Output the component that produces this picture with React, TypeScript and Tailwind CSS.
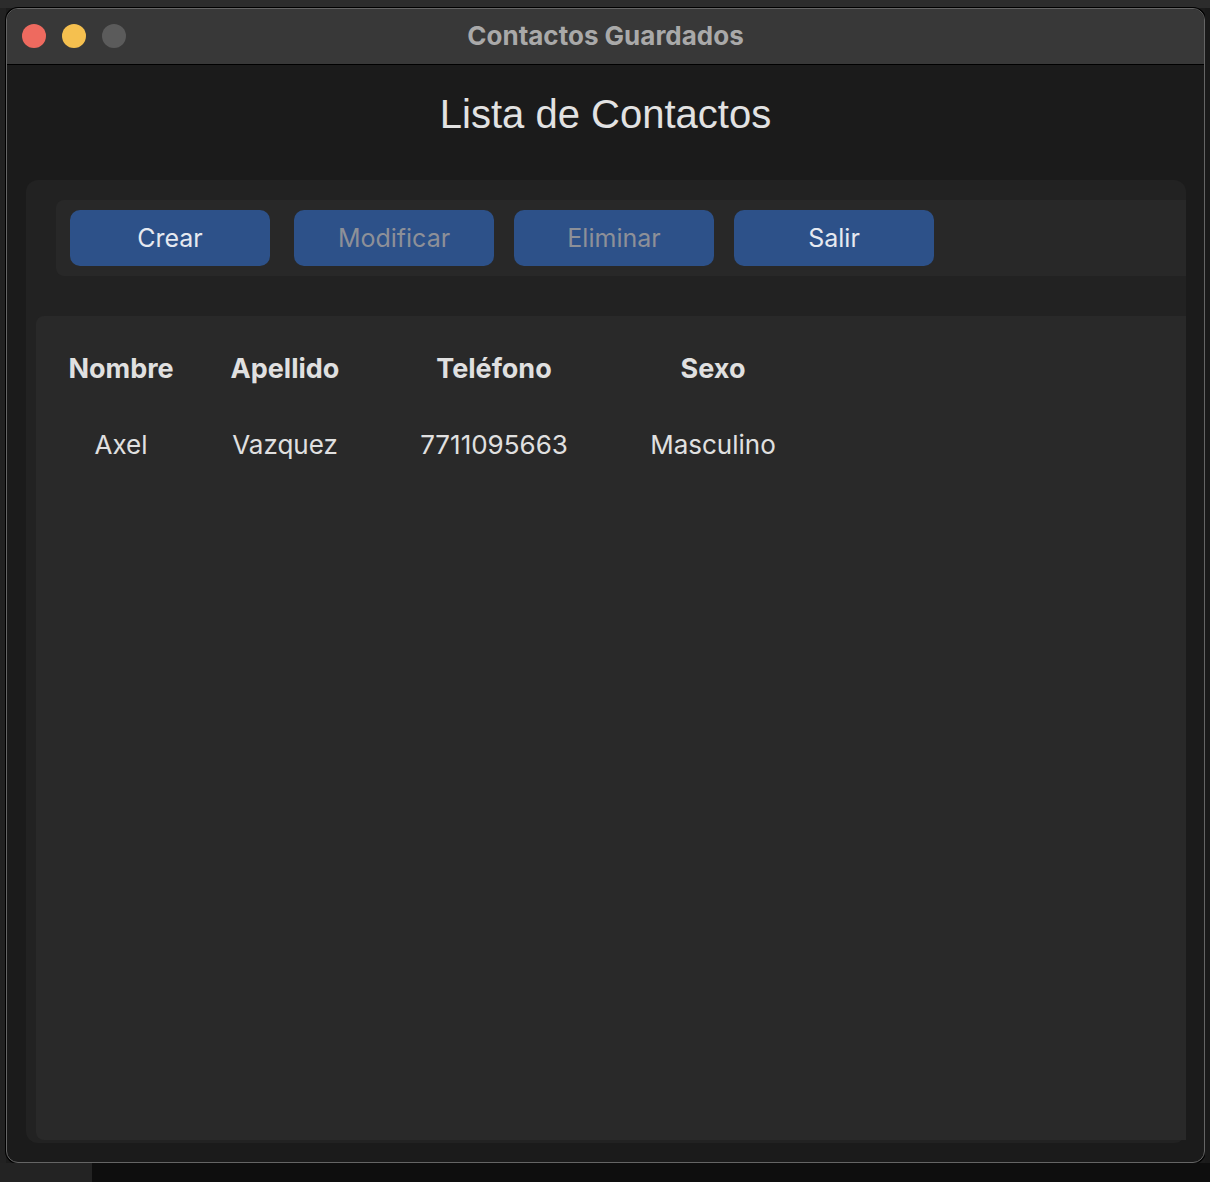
import React from "react";

const sf = "font-['Inter','Noto_Sans',sans-serif]";

function Btn({ label, disabled }: { label: string; disabled?: boolean }) {
  return (
    <div
      className={`w-[200px] h-[56px] rounded-[10px] bg-[#2d5189] flex items-center justify-center text-[25px] leading-none ${
        disabled ? "text-[#8d9098]" : "text-[#e6e9f0]"
      }`}
    >
      {label}
    </div>
  );
}

const cols = [
  { w: "w-[170px]", h: "Nombre", v: "Axel" },
  { w: "w-[158px]", h: "Apellido", v: "Vazquez" },
  { w: "w-[260px]", h: "Teléfono", v: "7711095663" },
  { w: "w-[178px]", h: "Sexo", v: "Masculino" },
];

export default function App() {
  return (
    <div className={`w-[1210px] h-[1182px] bg-[#1c1c1c] flex flex-col overflow-hidden ${sf}`}>
      <div className="h-[8px] bg-[#2c2c2c] shrink-0" />
      <div className="flex shrink-0">
        <div className="w-[6px] bg-[#222222]" />
        <div className="w-[1199px] h-[1155px] rounded-[12px] border border-[#656565] ring-1 ring-black bg-[#1b1b1b] flex flex-col overflow-hidden">
          {/* title bar */}
          <div className="h-[56px] pb-[1px] bg-[#383838] border-b border-black relative flex items-center justify-center shrink-0">
            <div className="absolute left-[15px] top-0 h-full pb-[2px] flex items-center gap-[16px]">
              <div className="w-[24px] h-[24px] rounded-full bg-[#ee6a5f]" />
              <div className="w-[24px] h-[24px] rounded-full bg-[#f5c04f]" />
              <div className="w-[24px] h-[24px] rounded-full bg-[#5b5b5b]" />
            </div>
            <div className="text-[26px] font-bold text-[#a9a9a9] leading-none">
              Contactos Guardados
            </div>
          </div>
          {/* heading */}
          <div className="h-[115px] shrink-0 flex justify-center pt-[26px]">
            <div className="font-['Liberation_Sans',Arial,sans-serif] text-[40px] leading-[46px] text-[#e2e2e2]">
              Lista de Contactos
            </div>
          </div>
          {/* frame */}
          <div className="mx-[18px] ml-[19px] mb-[19px] flex-1 bg-[#222222] rounded-[12px] pt-[20px] pb-[3px] flex flex-col">
            <div className="ml-[30px] h-[76px] bg-[#282828] rounded-l-[8px] flex items-center pl-[14px] shrink-0">
              <Btn label="Crear" />
              <div className="w-[24px]" />
              <Btn label="Modificar" disabled />
              <div className="w-[20px]" />
              <Btn label="Eliminar" disabled />
              <div className="w-[20px]" />
              <Btn label="Salir" />
            </div>
            <div className="ml-[10px] mt-[40px] flex-1 bg-[#292929] rounded-l-[8px] flex flex-col">
              <div className="flex mt-[32px] h-[40px] items-center">
                {cols.map((c) => (
                  <div key={c.h} className={`${c.w} text-center text-[27px] font-bold text-[#e0e0e0] leading-none`}>
                    {c.h}
                  </div>
                ))}
              </div>
              <div className="flex mt-[37px] h-[40px] items-center">
                {cols.map((c) => (
                  <div key={c.h} className={`${c.w} text-center text-[26px] text-[#e0e0e0] leading-none`}>
                    {c.v}
                  </div>
                ))}
              </div>
            </div>
          </div>
        </div>
        <div className="flex-1 bg-[#1a1a1a]" />
      </div>
      <div className="flex flex-1">
        <div className="w-[92px] bg-[#232323]" />
        <div className="flex-1 bg-[#0e0e0e]" />
      </div>
    </div>
  );
}
